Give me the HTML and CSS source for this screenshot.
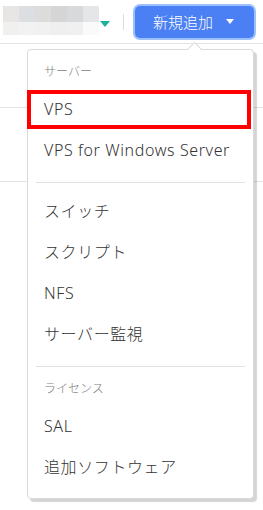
FILE: index.html
```html
<!DOCTYPE html>
<html lang="ja">
  <head>
    <meta charset="UTF-8" />
    <meta name="viewport" content="width=device-width, initial-scale=1.0" />
    <title>新規追加</title>
    <link rel="stylesheet" href="styles.css">
  </head>
  <body>
    <header class="topbar">
      <div class="account">
        <!-- blurred account name -->
        <div class="mosaic">
          <span></span><span></span><span></span><span></span><span></span><span></span>
          <span></span><span></span><span></span><span></span><span></span><span></span>
        </div>
        <span class="account-caret"></span>
      </div>
      <span class="v-sep"></span>
      <div class="add-wrap">
        <button class="add-btn" type="button">
          <span>新規追加</span>
          <span class="btn-caret"></span>
        </button>

        <!-- Dropdown menu -->
        <div class="add-menu">
          <div class="menu-head">サーバー</div>
          <a class="menu-item is-marked" href="#">VPS</a>
          <a class="menu-item" href="#">VPS for Windows Server</a>
          <div class="menu-divider"></div>
          <a class="menu-item" href="#">スイッチ</a>
          <a class="menu-item" href="#">スクリプト</a>
          <a class="menu-item" href="#">NFS</a>
          <a class="menu-item" href="#">サーバー監視</a>
          <div class="menu-divider"></div>
          <div class="menu-head">ライセンス</div>
          <a class="menu-item" href="#">SAL</a>
          <a class="menu-item" href="#">追加ソフトウェア</a>
        </div>
      </div>
    </header>

    <div class="rows">
      <div class="row row-1"></div>
      <div class="row row-2"></div>
    </div>
  </body>
</html>
```

FILE: styles.css
```css
/* General page styling */
body {
  margin: 0;
  min-height: 100vh;
  font-family: "Noto Sans", "Noto Sans CJK JP", sans-serif;
  font-weight: 300;
  color: #333;
  background: #fff;
}

.topbar {
  display: flex;
  align-items: center;
  height: 43px;
  border-bottom: 1px solid #e3e3e3;
  padding-left: 3px;
}

.account {
  display: flex;
  align-items: center;
}

.mosaic {
  display: grid;
  grid-template-columns: repeat(6, 16px);
  grid-template-rows: 16px 13px;
  margin-top: -2px;
}
.mosaic span:nth-child(1) { background: #e7e6e4; }
.mosaic span:nth-child(2) { background: #dcdfe1; }
.mosaic span:nth-child(3) { background: #dcdcda; }
.mosaic span:nth-child(4) { background: #d5d5d5; }
.mosaic span:nth-child(5) { background: #d8d9db; }
.mosaic span:nth-child(6) { background: #e5e6e8; }
.mosaic span:nth-child(7) { background: #f0f0ef; }
.mosaic span:nth-child(8) { background: #f2f2f2; }
.mosaic span:nth-child(9) { background: #f1f1f1; }
.mosaic span:nth-child(10) { background: #efefef; }
.mosaic span:nth-child(11) { background: #f0f0f0; }
.mosaic span:nth-child(12) { background: #fafafa; }

.account-caret {
  width: 0;
  height: 0;
  margin-left: 1px;
  margin-top: 4px;
  border-left: 5px solid transparent;
  border-right: 5px solid transparent;
  border-top: 6px solid #19b39c;
}

.v-sep {
  width: 1px;
  height: 16px;
  margin-left: 13px;
  background: #dcdcdc;
}

.add-wrap {
  position: relative;
  margin-left: 11px;
}

.add-btn {
  display: flex;
  align-items: center;
  width: 119px;
  height: 32px;
  padding: 0 20px 0 18px;
  border: none;
  border-radius: 5px;
  background: #4a80f4;
  box-shadow: 0 0 0 2px #9cc0fb;
  color: #fff;
  font-family: inherit;
  font-weight: 300;
  font-size: 15px;
  line-height: 20px;
  cursor: pointer;
}

.btn-caret {
  width: 0;
  height: 0;
  margin-left: auto;
  border-left: 4px solid transparent;
  border-right: 4px solid transparent;
  border-top: 5px solid #fff;
}

.add-menu {
  position: absolute;
  top: 43px;
  right: 0;
  z-index: 10;
  width: 225px;
  padding: 9px 0;
  background: #fff;
  border: 1px solid #dadada;
  border-radius: 4px;
  box-shadow: 3px 3px 1px rgba(0, 0, 0, 0.17);
}

/* little arrow under the button */
.add-menu::before {
  content: "";
  position: absolute;
  top: -6px;
  right: 53px;
  width: 10px;
  height: 10px;
  background: #fff;
  border-top: 1px solid #dadada;
  border-left: 1px solid #dadada;
  transform: rotate(45deg);
}

.menu-head {
  padding: 5px 16px 10px;
  font-size: 12px;
  line-height: 16px;
  color: #808080;
}

.menu-item {
  position: relative;
  display: block;
  padding: 9px 16px 11px;
  font-size: 16px;
  line-height: 21px;
  letter-spacing: 0.6px;
  color: #333;
  text-decoration: none;
}

/* red annotation box */
.is-marked::after {
  content: "";
  position: absolute;
  top: 0;
  left: -1px;
  right: 2px;
  bottom: 2px;
  border: 4px solid #f00;
}

.menu-divider {
  height: 1px;
  margin: 10px 8px 9px;
  background: #e2e2e2;
}

.row {
  border-bottom: 1px solid #e3e3e3;
}
.row-1 {
  height: 63px;
}
.row-2 {
  height: 73px;
}
```
